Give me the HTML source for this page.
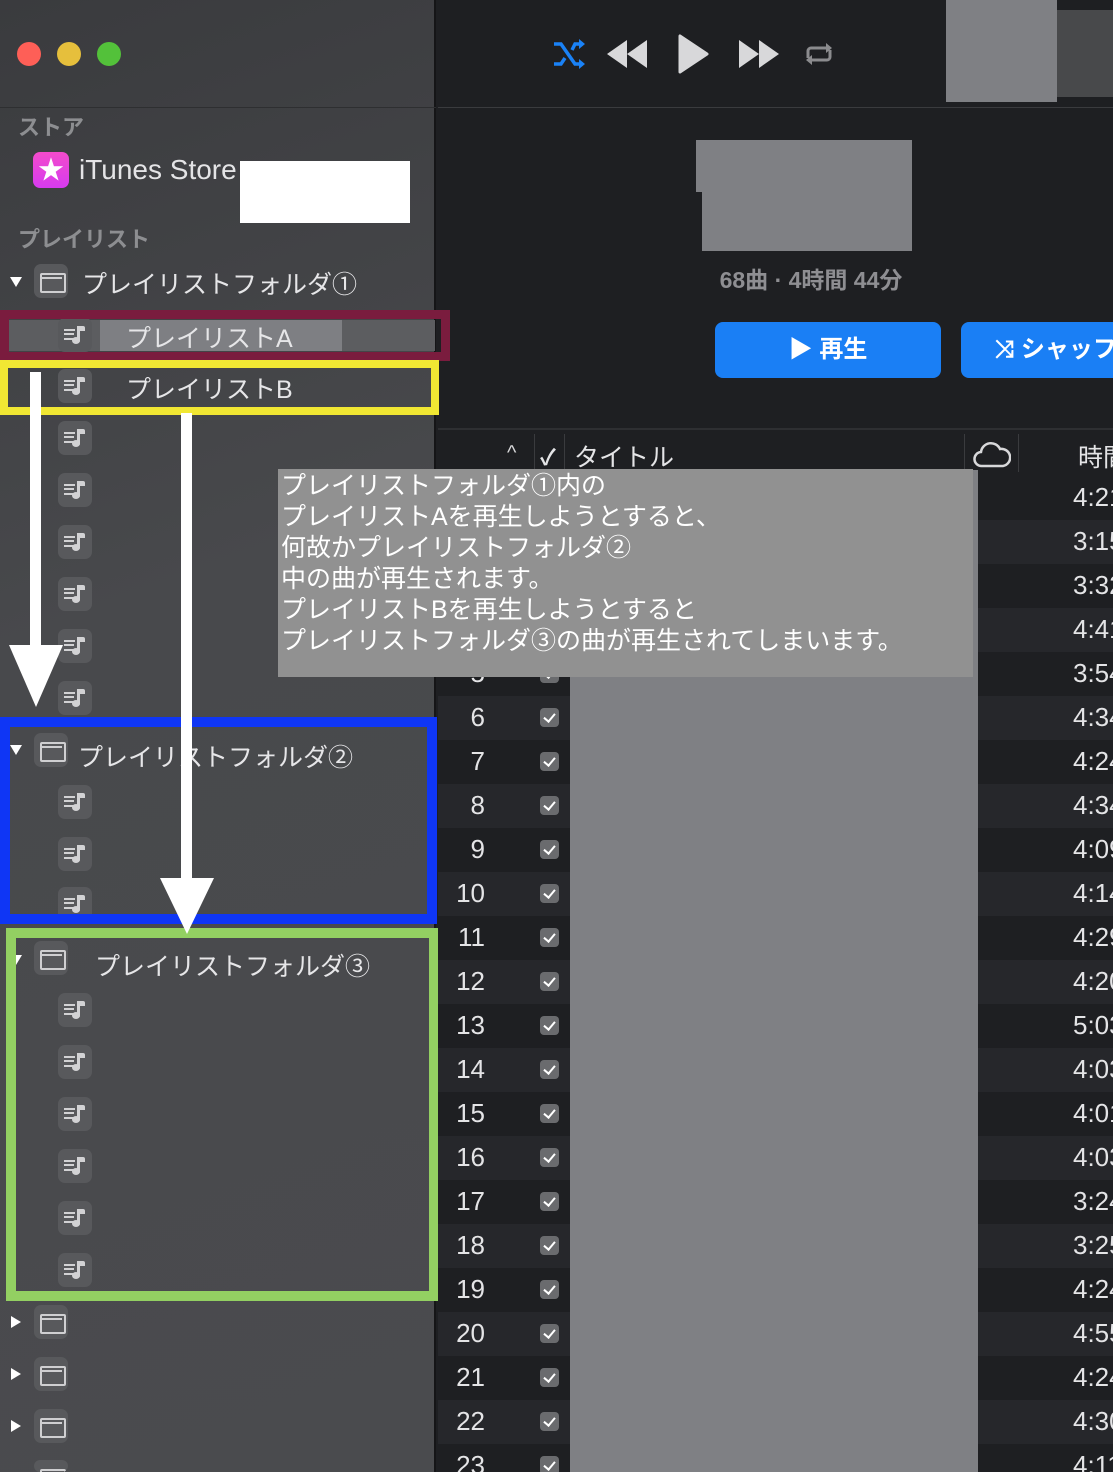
<!DOCTYPE html>
<html><head><meta charset="utf-8">
<style>
*{margin:0;padding:0;box-sizing:border-box}
html{width:1113px;height:1472px;overflow:hidden}
body{width:1113px;height:1472px;overflow:hidden;position:relative;background:#1e1f22;font-family:"Liberation Sans","Noto Sans CJK JP",sans-serif}
.a{position:absolute}
.sb{left:0;top:0;width:436px;height:1472px;background:linear-gradient(160deg,#3a3b3e,#48494c 40%,#4a4b4e);border-right:2px solid #151517}
.ic{position:absolute;left:58px;width:34px;height:34px;border-radius:7px;background:#58595c}
.ic:before{content:"";position:absolute;left:6px;top:11px;width:11px;height:7px;border-top:2px solid #d2d2d4;border-bottom:2px solid #d2d2d4}
.ic:after{content:"";position:absolute;left:6px;top:15px;width:10px;height:2px;background:#d2d2d4}
.ic i{position:absolute;left:19px;top:8px;width:3px;height:16px;background:#d2d2d4;border-radius:1px}
.ic i:before{content:"";position:absolute;left:0;top:0;width:8px;height:5px;background:#d2d2d4;border-radius:0 2px 0 0}
.ic i:after{content:"";position:absolute;left:-5px;top:11px;width:8px;height:7px;background:#d2d2d4;border-radius:50%}
.fd{position:absolute;left:34px;width:34px;height:34px;border-radius:7px;background:#58595c;overflow:hidden}
.fd:before{content:"";position:absolute;left:6px;top:9px;width:22px;height:16px;border:2px solid #cfcfd1;border-radius:2px 2px 2px 2px}
.fd:after{content:"";position:absolute;left:6px;top:13px;width:22px;height:2px;background:#cfcfd1}
.tri{position:absolute;left:10px;width:0;height:0;border-left:6px solid transparent;border-right:6px solid transparent;border-top:10px solid #fff}
.trr{position:absolute;left:11px;width:0;height:0;border-top:6px solid transparent;border-bottom:6px solid transparent;border-left:10px solid #fff}
.lbl{position:absolute;color:#e6e6e8;font-size:25px;white-space:nowrap}
.row{position:absolute;left:438px;width:675px;height:44px;overflow:hidden}
.n{position:absolute;right:628px;top:6px;color:#e4e4e6;font-size:26px}
.cb{position:absolute;left:102px;top:12px;width:19px;height:19px;border-radius:4px;background:#6a6b6e}
.cb:after{content:"";position:absolute;left:6px;top:3px;width:5px;height:9px;border-right:2.5px solid #fff;border-bottom:2.5px solid #fff;transform:rotate(40deg)}
.t{position:absolute;left:635px;top:6px;color:#e4e4e6;font-size:26px}
</style></head><body>
<div class="a sb"></div>
<div class="a" style="left:0;top:107px;width:436px;height:1px;background:#2e2f31"></div>
<div class="a" style="left:17px;top:42px;width:24px;height:24px;border-radius:50%;background:#fe5f57"></div>
<div class="a" style="left:57px;top:42px;width:24px;height:24px;border-radius:50%;background:#e6bf3c"></div>
<div class="a" style="left:97px;top:42px;width:24px;height:24px;border-radius:50%;background:#53c13a"></div>
<div class="a" style="left:18px;top:110px;color:#8d8e91;font-size:22px;font-weight:bold">ストア</div>
<div class="a" style="left:33px;top:152px;width:36px;height:36px;border-radius:7px;background:linear-gradient(#f44bcb,#d63bef);color:#fff;font-size:26px;text-align:center;line-height:36px">★</div>
<div class="a" style="left:79px;top:154px;color:#e4e4e6;font-size:28px">iTunes Store</div>
<div class="a" style="left:240px;top:161px;width:170px;height:62px;background:#fff"></div>
<div class="a" style="left:18px;top:222px;color:#8d8e91;font-size:22px;font-weight:bold">プレイリスト</div>

<div class="tri" style="top:277px"></div><div class="fd" style="top:264px"></div>
<div class="lbl" style="left:82px;top:265px">プレイリストフォルダ①</div>

<div class="a" style="left:5px;top:320px;width:430px;height:31px;background:#5c5d60"></div>
<div class="a" style="left:100px;top:320px;width:242px;height:31px;background:#7e7f83"></div>
<div class="ic" style="top:318px"><i></i></div><div class="lbl" style="left:126px;top:319px">プレイリストA</div>
<div class="ic" style="top:369px"><i></i></div><div class="lbl" style="left:126px;top:370px">プレイリストB</div>
<div class="ic" style="top:421px"><i></i></div>
<div class="ic" style="top:473px"><i></i></div>
<div class="ic" style="top:525px"><i></i></div>
<div class="ic" style="top:577px"><i></i></div>
<div class="ic" style="top:629px"><i></i></div>
<div class="ic" style="top:681px"><i></i></div>

<div class="tri" style="top:745px"></div><div class="fd" style="top:733px"></div>
<div class="lbl" style="left:78px;top:738px">プレイリストフォルダ②</div>
<div class="ic" style="top:785px"><i></i></div>
<div class="ic" style="top:837px"><i></i></div>
<div class="ic" style="top:887px"><i></i></div>

<div class="tri" style="top:955px"></div><div class="fd" style="top:941px"></div>
<div class="lbl" style="left:95px;top:947px">プレイリストフォルダ③</div>
<div class="ic" style="top:993px"><i></i></div>
<div class="ic" style="top:1045px"><i></i></div>
<div class="ic" style="top:1097px"><i></i></div>
<div class="ic" style="top:1149px"><i></i></div>
<div class="ic" style="top:1201px"><i></i></div>
<div class="ic" style="top:1253px"><i></i></div>
<div class="trr" style="top:1316px"></div><div class="fd" style="top:1305px"></div>
<div class="trr" style="top:1368px"></div><div class="fd" style="top:1357px"></div>
<div class="trr" style="top:1420px"></div><div class="fd" style="top:1409px"></div>
<div class="fd" style="top:1460px;height:12px"></div>

<div class="a" style="left:0;top:310px;width:450px;height:51px;border:9px solid #7a1c3e"></div>
<div class="a" style="left:0;top:360px;width:439px;height:55px;border:8px solid #f1e733"></div>
<div class="a" style="left:0;top:717px;width:437px;height:207px;border:10px solid #0f36f5"></div>
<div class="a" style="left:6px;top:928px;width:433px;height:373px;border:10px solid #93d062"></div>
<div class="a" style="left:30px;top:372px;width:11px;height:280px;background:#fff"></div>
<div class="a" style="left:9px;top:645px;width:0;height:0;border-left:27px solid transparent;border-right:27px solid transparent;border-top:62px solid #fff"></div>
<div class="a" style="left:181px;top:413px;width:11px;height:470px;background:#fff"></div>
<div class="a" style="left:160px;top:878px;width:0;height:0;border-left:27px solid transparent;border-right:27px solid transparent;border-top:56px solid #fff"></div>

<div class="a" style="left:438px;top:107px;width:675px;height:1px;background:#3a3b3e"></div>
<svg class="a" style="left:550px;top:34px" width="290" height="42" viewBox="0 0 290 42">
<path d="M4 10h7l14 20h7M4 30h7l4-6M22 16l3-6h7" fill="none" stroke="#1a82f7" stroke-width="3.5"/>
<path d="M29 5l6 5-6 5zM29 25l6 5-6 5z" fill="#1a82f7"/>
<path d="M77 6v28L57 20zM97 6v28L77 20z" fill="#d8d8da"/>
<path d="M130 2v36l27-18z" fill="#d8d8da" stroke="#d8d8da" stroke-width="3" stroke-linejoin="round"/>
<path d="M189 6v28l20-14zM209 6v28l20-14z" fill="#d8d8da"/>
<path d="M258 24v-7a3 3 0 0 1 3-3h18M280 16v7a3 3 0 0 1-3 3h-18" fill="none" stroke="#8b8b8e" stroke-width="3"/>
<path d="M276 9l6 5-6 5zM262 21l-6 5 6 5z" fill="#8b8b8e"/>
</svg>
<div class="a" style="left:946px;top:0;width:111px;height:102px;background:#7f8084"></div>
<div class="a" style="left:1057px;top:10px;width:56px;height:87px;background:#48494b"></div>
<div class="a" style="left:696px;top:140px;width:216px;height:52px;background:#7f8084"></div>
<div class="a" style="left:702px;top:190px;width:210px;height:61px;background:#7f8084"></div>
<div class="a" style="left:696px;top:261px;width:230px;color:#8e8e92;font-size:23px;font-weight:bold;text-align:center">68曲 · 4時間 44分</div>
<div class="a" style="left:715px;top:322px;width:226px;height:56px;border-radius:8px;background:#1a7ff5;color:#fff;font-size:24px;font-weight:bold;text-align:center;line-height:56px">▶ 再生</div>
<div class="a" style="left:961px;top:322px;width:160px;height:56px;border-radius:8px;background:#1a7ff5;color:#fff;font-size:24px;font-weight:bold;line-height:56px;padding-left:34px;white-space:nowrap">⤨ シャッフル</div>
<div class="a" style="left:438px;top:428px;width:675px;height:2px;background:#2e2f32"></div>
<div class="a" style="left:507px;top:442px;color:#d8d8da;font-size:20px">^</div>
<div class="a" style="left:534px;top:434px;width:1px;height:38px;background:#3a3b3e"></div>
<div class="a" style="left:540px;top:440px;color:#e4e4e6;font-size:22px;font-weight:bold">✓</div>
<div class="a" style="left:564px;top:434px;width:1px;height:38px;background:#3a3b3e"></div>
<div class="a" style="left:574px;top:438px;color:#e4e4e6;font-size:25px">タイトル</div>
<div class="a" style="left:964px;top:434px;width:1px;height:38px;background:#3a3b3e"></div>
<svg class="a" style="left:973px;top:441px" width="38" height="28" viewBox="0 0 38 28"><path d="M9 25a7 7 0 0 1-1-14 10 10 0 0 1 19-3 8 8 0 0 1 3 17z" fill="none" stroke="#d8d8da" stroke-width="2.5"/></svg>
<div class="a" style="left:1018px;top:434px;width:1px;height:38px;background:#3a3b3e"></div>
<div class="a" style="left:1078px;top:438px;color:#e4e4e6;font-size:25px;white-space:nowrap">時間</div>

<div class="row" style="top:476px;background:#1e1f22"><span class="n">1</span><span class="cb"></span><span class="t">4:21</span></div>
<div class="row" style="top:520px;background:#26272b"><span class="n">2</span><span class="cb"></span><span class="t">3:15</span></div>
<div class="row" style="top:564px;background:#1e1f22"><span class="n">3</span><span class="cb"></span><span class="t">3:32</span></div>
<div class="row" style="top:608px;background:#26272b"><span class="n">4</span><span class="cb"></span><span class="t">4:41</span></div>
<div class="row" style="top:652px;background:#1e1f22"><span class="n">5</span><span class="cb"></span><span class="t">3:54</span></div>
<div class="row" style="top:696px;background:#26272b"><span class="n">6</span><span class="cb"></span><span class="t">4:34</span></div>
<div class="row" style="top:740px;background:#1e1f22"><span class="n">7</span><span class="cb"></span><span class="t">4:24</span></div>
<div class="row" style="top:784px;background:#26272b"><span class="n">8</span><span class="cb"></span><span class="t">4:34</span></div>
<div class="row" style="top:828px;background:#1e1f22"><span class="n">9</span><span class="cb"></span><span class="t">4:09</span></div>
<div class="row" style="top:872px;background:#26272b"><span class="n">10</span><span class="cb"></span><span class="t">4:14</span></div>
<div class="row" style="top:916px;background:#1e1f22"><span class="n">11</span><span class="cb"></span><span class="t">4:29</span></div>
<div class="row" style="top:960px;background:#26272b"><span class="n">12</span><span class="cb"></span><span class="t">4:20</span></div>
<div class="row" style="top:1004px;background:#1e1f22"><span class="n">13</span><span class="cb"></span><span class="t">5:03</span></div>
<div class="row" style="top:1048px;background:#26272b"><span class="n">14</span><span class="cb"></span><span class="t">4:03</span></div>
<div class="row" style="top:1092px;background:#1e1f22"><span class="n">15</span><span class="cb"></span><span class="t">4:01</span></div>
<div class="row" style="top:1136px;background:#26272b"><span class="n">16</span><span class="cb"></span><span class="t">4:03</span></div>
<div class="row" style="top:1180px;background:#1e1f22"><span class="n">17</span><span class="cb"></span><span class="t">3:24</span></div>
<div class="row" style="top:1224px;background:#26272b"><span class="n">18</span><span class="cb"></span><span class="t">3:25</span></div>
<div class="row" style="top:1268px;background:#1e1f22"><span class="n">19</span><span class="cb"></span><span class="t">4:24</span></div>
<div class="row" style="top:1312px;background:#26272b"><span class="n">20</span><span class="cb"></span><span class="t">4:55</span></div>
<div class="row" style="top:1356px;background:#1e1f22"><span class="n">21</span><span class="cb"></span><span class="t">4:24</span></div>
<div class="row" style="top:1400px;background:#26272b"><span class="n">22</span><span class="cb"></span><span class="t">4:30</span></div>
<div class="row" style="top:1444px;height:28px;background:#1e1f22"><span class="n">23</span><span class="cb"></span><span class="t">4:11</span></div>
<div class="a" style="left:570px;top:470px;width:408px;height:1002px;background:#7f8084"></div>

<div class="a" style="left:278px;top:469px;width:695px;height:208px;background:#919191;color:#fff;font-size:25px;line-height:31px;padding:2px 0 0 3px;white-space:nowrap">プレイリストフォルダ①内の<br>プレイリストAを再生しようとすると、<br>何故かプレイリストフォルダ②<br>中の曲が再生されます。<br>プレイリストBを再生しようとすると<br>プレイリストフォルダ③の曲が再生されてしまいます。</div>
</body></html>
